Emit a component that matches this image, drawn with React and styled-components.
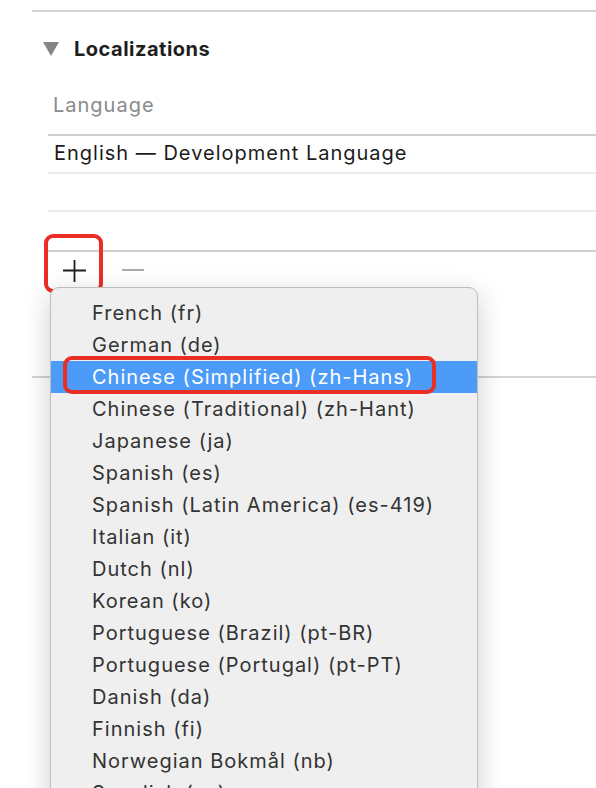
import React from 'react';
import styled, { createGlobalStyle } from 'styled-components';

const GlobalStyle = createGlobalStyle`
  html, body {
    margin: 0;
    padding: 0;
    background: #fff;
    overflow: hidden;
  }
  body {
    font-family: Inter, "Liberation Sans", sans-serif;
    -webkit-font-smoothing: antialiased;
  }
`;

const Page = styled.div`
  position: relative;
  width: 596px;
  height: 788px;
  overflow: hidden;
  background: #fff;
`;

const Separator = styled.div`
  margin-left: 32px;
  margin-top: ${p => p.$top || 0}px;
  border-top: 2px solid #d3d3d3;
`;

const SectionHeader = styled.div`
  display: flex;
  align-items: center;
  gap: 15px;
  height: 73px;
  padding-left: 43px;
`;

const Disclosure = styled.span`
  width: 0;
  height: 0;
  border-left: 8px solid transparent;
  border-right: 8px solid transparent;
  border-top: 14px solid #858585;
`;

const Title = styled.h2`
  margin: 0;
  font-size: 20px;
  font-weight: 700;
  letter-spacing: 0.5px;
  color: #1e1e1e;
`;

const Table = styled.div`
  margin-left: 48px;
`;

const HeadCell = styled.div`
  display: flex;
  align-items: center;
  height: 39px;
  padding: 0 0 10px 5px;
  font-size: 20px;
  letter-spacing: 1px;
  color: #8a8a8a;
  border-bottom: 2px solid #d0d0d0;
`;

const Row = styled.div`
  display: flex;
  align-items: center;
  height: 33px;
  padding: 0 0 3px 6px;
  font-size: 20px;
  letter-spacing: 1px;
  color: #1c1c1c;
  border-bottom: 2px solid #ebebeb;
`;

const TableSpace = styled.div`
  height: 38px;
`;

const ButtonBar = styled.div`
  display: flex;
  align-items: center;
  gap: 35px;
  height: 38px;
  padding-left: 15px;
  border-top: 2px solid #d0d0d0;
`;

const BarButton = styled.button`
  position: relative;
  display: flex;
  align-items: center;
  justify-content: center;
  width: 23px;
  height: 22px;
  padding: 0;
  margin-top: ${p => p.$dy || 0}px;
  border: 0;
  background: none;
`;

const Mark = styled.span`
  position: absolute;
  left: ${p => p.$l}px;
  top: ${p => p.$t}px;
  width: ${p => p.$w}px;
  height: ${p => p.$h}px;
  box-sizing: border-box;
  border: 4px solid #ea2d25;
  border-radius: 9px;
  pointer-events: none;
`;

const Menu = styled.ul`
  position: absolute;
  left: 50px;
  top: 287px;
  width: 428px;
  height: 560px;
  margin: 0;
  padding: 9px 0 0;
  list-style: none;
  box-sizing: border-box;
  background: #efefef;
  border: 1px solid #bdbdbd;
  border-radius: 9px;
  box-shadow: 0 8px 28px rgba(0, 0, 0, 0.2);
`;

const Item = styled.li`
  position: relative;
  display: flex;
  align-items: center;
  height: 32px;
  padding-left: 41px;
  font-size: 20px;
  letter-spacing: 1px;
  color: ${p => (p.$active ? '#fff' : '#333')};
  background: ${p => (p.$active ? '#4c9bf8' : 'transparent')};
`;

const languages = [
  'French (fr)',
  'German (de)',
  'Chinese (Simplified) (zh-Hans)',
  'Chinese (Traditional) (zh-Hant)',
  'Japanese (ja)',
  'Spanish (es)',
  'Spanish (Latin America) (es-419)',
  'Italian (it)',
  'Dutch (nl)',
  'Korean (ko)',
  'Portuguese (Brazil) (pt-BR)',
  'Portuguese (Portugal) (pt-PT)',
  'Danish (da)',
  'Finnish (fi)',
  'Norwegian Bokmål (nb)',
  'Swedish (sv)',
];

const App = () => {
  return (
    <Page>
      <GlobalStyle />
      <Separator $top={10} />
      <SectionHeader>
        <Disclosure />
        <Title>Localizations</Title>
      </SectionHeader>
      <Table>
        <HeadCell>Language</HeadCell>
        <Row>English — Development Language</Row>
        <Row />
        <TableSpace />
        <ButtonBar>
          <BarButton>
            <svg width="23" height="22" viewBox="0 0 23 22">
              <path d="M0 10.5h23M11.5 0v22" stroke="#1d1d1d" strokeWidth="1.8" />
            </svg>
            <Mark $l={-19} $t={-26} $w={59} $h={59} />
          </BarButton>
          <BarButton $dy={-2}>
            <svg width="22" height="4" viewBox="0 0 22 4">
              <path d="M0 2h22" stroke="#adadad" strokeWidth="2" />
            </svg>
          </BarButton>
        </ButtonBar>
      </Table>
      <Separator $top={86} />

      <Menu>
        {languages.map((name, i) => (
          <Item key={name} $active={i === 2}>
            {name}
            {i === 2 && <Mark $l={12} $t={-5} $w={373} $h={38} />}
          </Item>
        ))}
      </Menu>
    </Page>
  );
};

export default App;
